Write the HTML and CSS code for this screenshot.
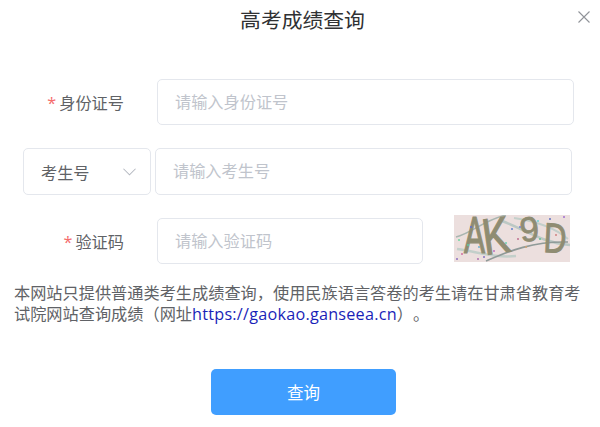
FILE: index.html
```html
<!DOCTYPE html>
<html lang="zh-CN">
  <head>
    <meta charset="UTF-8" />
    <meta name="viewport" content="width=device-width, initial-scale=1.0" />
    <title>高考成绩查询</title>
    <link rel="stylesheet" href="styles.css">
  </head>
  <body>
    <div class="dialog">
      <div class="header">高考成绩查询</div>
      <svg class="close" viewBox="0 0 12 12" width="12" height="12">
        <path d="M0.5 0.5L11.5 11.5M11.5 0.5L0.5 11.5" stroke="#909399" stroke-width="1.1" fill="none" />
      </svg>

      <div class="row row-id">
        <label class="label"><span class="star">*</span>身份证号</label>
        <div class="field field-id">请输入身份证号</div>
      </div>

      <div class="row row-exam">
        <div class="select">
          <span>考生号</span>
          <svg viewBox="0 0 14 8" width="13" height="8">
            <path d="M0.5 0.5L7 7L13.5 0.5" stroke="#b4b8c0" stroke-width="1.1" fill="none" />
          </svg>
        </div>
        <div class="field field-exam">请输入考生号</div>
      </div>

      <div class="row row-code">
        <label class="label"><span class="star">*</span>验证码</label>
        <div class="field field-code">请输入验证码</div>
        <svg class="captcha" viewBox="0 0 116 47" width="116" height="47">
          <rect width="116" height="47" fill="#ecdfde" />
          <path d="M2 22C18 18 30 5 52 0" stroke="#a9b5b0" stroke-width="1.5" fill="none" />
          <path d="M48 6C70 14 88 28 116 30" stroke="#bcc8c4" stroke-width="2.5" fill="none" />
          <path d="M60 3C80 6 100 12 114 24" stroke="#c3cfca" stroke-width="2" fill="none" />
          <path d="M3 34C25 37 40 43 62 41" stroke="#c3cfca" stroke-width="2.5" fill="none" />
          <path d="M32 46C55 36 80 26 114 27" stroke="#8f9a98" stroke-width="1.6" fill="none" />
          <g class="captcha-text">
            <text transform="translate(10 38) scale(1.05 1.7)">A</text>
            <text transform="translate(31 40) rotate(-8) scale(1.35 1.7)">K</text>
            <text transform="translate(67 27) rotate(-6) scale(1.15 1.15)">9</text>
            <text transform="translate(89 37) rotate(3) scale(1.05 1.4)">D</text>
          </g>
          <g>
            <circle cx="5" cy="25" r="1" fill="#6fd6a0" />
            <circle cx="17" cy="12" r="1" fill="#5a6fd0" />
            <circle cx="8" cy="39" r="1" fill="#d06fa0" />
            <circle cx="3" cy="44" r="1" fill="#8f70c0" />
            <circle cx="14" cy="30" r="1" fill="#60c8a0" />
            <circle cx="25" cy="32" r="1" fill="#6fb0d0" />
            <circle cx="24" cy="44" r="1" fill="#b070b0" />
            <circle cx="40" cy="36" r="1" fill="#c070c0" />
            <circle cx="52" cy="28" r="1" fill="#70d0b0" />
            <circle cx="58" cy="14" r="1" fill="#6080d0" />
            <circle cx="66" cy="12" r="1" fill="#7080d0" />
            <circle cx="72" cy="32" r="1" fill="#d0a070" />
            <circle cx="84" cy="6" r="1" fill="#70d0d0" />
            <circle cx="96" cy="4" r="1" fill="#6070c0" />
            <circle cx="110" cy="2" r="1" fill="#a070d0" />
            <circle cx="102" cy="20" r="1" fill="#d08080" />
            <circle cx="86" cy="24" r="1" fill="#60c090" />
            <circle cx="30" cy="42" r="1" fill="#8070c0" />
            <circle cx="64" cy="24" r="1" fill="#c07090" />
          </g>
        </svg>
      </div>

      <p class="notice">本网站只提供普通类考生成绩查询，使用民族语言答卷的考生请在甘肃省教育考试院网站查询成绩（网址<a href="#">https://gaokao.ganseea.cn</a>）。</p>

      <div class="actions">
        <button class="btn">查询</button>
      </div>
    </div>
  </body>
</html>
```

FILE: styles.css
```css
* {
  margin: 0;
  padding: 0;
  box-sizing: border-box;
}

html,
body {
  height: 100%;
  width: 100%;
  overflow: hidden;
}

body {
  background: #fff;
  font-family: "Open Sans", "Noto Sans CJK SC", sans-serif;
  font-size: 16.2px;
  color: #606266;
  text-spacing-trim: space-all;
}

.dialog {
  position: relative;
  height: 427px;
}

.header {
  height: 40px;
  line-height: 40px;
  padding-left: 5px;
  text-align: center;
  font-size: 20.8px;
  color: #303133;
  margin-bottom: 39px;
}

.close {
  position: absolute;
  top: 11px;
  left: 578px;
}

.row {
  display: flex;
  align-items: center;
  margin-bottom: 23px;
}

.label {
  width: 124px;
  text-align: right;
  flex-shrink: 0;
}

.star {
  color: #f56c6c;
  margin-right: 3px;
}

.field {
  height: 46px;
  line-height: 44px;
  border: 1px solid #e4e7ed;
  border-radius: 5px;
  padding-left: 17px;
  color: #c0c4cc;
}

.field-id {
  margin-left: 33px;
  width: 417px;
}

.row-exam {
  padding-left: 23px;
}

.select {
  width: 128px;
  height: 47px;
  border: 1px solid #e4e7ed;
  border-radius: 5px;
  display: flex;
  align-items: center;
  justify-content: space-between;
  padding: 0 14px 0 17px;
}

.field-exam {
  margin-left: 4px;
  width: 417px;
  height: 47px;
}

.field-code {
  margin-left: 33px;
  width: 266px;
}

.captcha {
  margin-left: 31px;
  margin-top: -5px;
}

.captcha-text text {
  font-family: "Liberation Sans", sans-serif;
  font-size: 30px;
  fill: #8f8c72;
  stroke: #8f8c72;
  stroke-width: 0.7px;
}

.notice {
  padding: 0 14px;
  line-height: 21px;
  margin-top: -4px;
}

.notice a {
  color: #1a1fb8;
  text-decoration: none;
  letter-spacing: 0.24px;
}

.actions {
  display: flex;
  margin-top: 44px;
  padding-left: 211px;
}

.btn {
  width: 185px;
  height: 46px;
  background: #409eff;
  border: none;
  border-radius: 5px;
  color: #fff;
  font-family: inherit;
  font-size: 16.5px;
}
```
